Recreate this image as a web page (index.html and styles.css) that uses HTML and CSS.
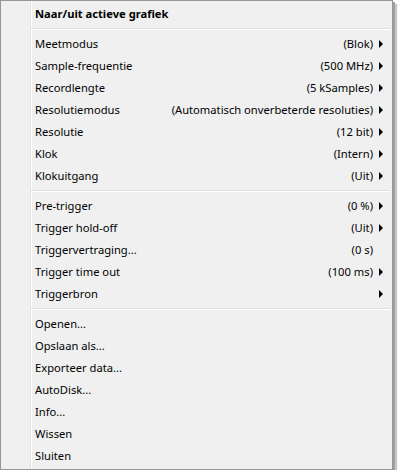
FILE: index.html
```html
<!DOCTYPE html>
<html>
<head>
<meta charset="utf-8">
<link rel="stylesheet" href="styles.css">
</head>
<body>
<div class="menu">
  <div class="row header"><span class="label">Naar/uit actieve grafiek</span></div>
  <div class="sep"></div>
  <div class="row"><span class="label">Meetmodus</span><span class="value">(Blok)</span><span class="arrow"></span></div>
  <div class="row"><span class="label">Sample-frequentie</span><span class="value">(500 MHz)</span><span class="arrow"></span></div>
  <div class="row"><span class="label">Recordlengte</span><span class="value">(5 kSamples)</span><span class="arrow"></span></div>
  <div class="row"><span class="label">Resolutiemodus</span><span class="value">(Automatisch onverbeterde resoluties)</span><span class="arrow"></span></div>
  <div class="row"><span class="label">Resolutie</span><span class="value">(12 bit)</span><span class="arrow"></span></div>
  <div class="row"><span class="label">Klok</span><span class="value">(Intern)</span><span class="arrow"></span></div>
  <div class="row"><span class="label">Klokuitgang</span><span class="value">(Uit)</span><span class="arrow"></span></div>
  <div class="sep"></div>
  <div class="row"><span class="label">Pre-trigger</span><span class="value">(0 %)</span><span class="arrow"></span></div>
  <div class="row"><span class="label">Trigger hold-off</span><span class="value">(Uit)</span><span class="arrow"></span></div>
  <div class="row"><span class="label">Triggervertraging...</span><span class="value">(0 s)</span><span class="noarrow"></span></div>
  <div class="row"><span class="label">Trigger time out</span><span class="value">(100 ms)</span><span class="arrow"></span></div>
  <div class="row"><span class="label">Triggerbron</span><span class="value"></span><span class="arrow"></span></div>
  <div class="sep"></div>
  <div class="row"><span class="label">Openen...</span></div>
  <div class="row"><span class="label">Opslaan als...</span></div>
  <div class="row"><span class="label">Exporteer data...</span></div>
  <div class="row"><span class="label">AutoDisk...</span></div>
  <div class="row"><span class="label">Info...</span></div>
  <div class="row"><span class="label">Wissen</span></div>
  <div class="row"><span class="label">Sluiten</span></div>
</div>
</body>
</html>
```
FILE: styles.css
```css
html, body {
  margin: 0;
  padding: 0;
  background: #ffffff;
}
.menu {
  box-sizing: border-box;
  width: 393px;
  border: 1px solid #979797;
  padding: 2px;
  background-color: #f0f0f0;
  background-image: linear-gradient(to right, transparent 29px, #e2e3e3 29px, #e2e3e3 30px, #ffffff 30px, #ffffff 31px, transparent 31px);
  background-origin: padding-box;
  box-shadow: 2px 2px 0 0 #a0a0a0, 4px 4px 1px 0 #c8c8c8;
  font-family: "Noto Sans", "Open Sans", sans-serif;
  font-size: 11.2px;
  color: #000;
}
.row {
  box-sizing: border-box;
  display: flex;
  align-items: center;
  height: 22px;
  padding-left: 32px;
  padding-right: 7px;
  padding-bottom: 1px;
  white-space: nowrap;
}
.label {
  flex: 1;
}
.header .label {
  font-weight: bold;
}
.value {
  text-align: right;
}
.arrow {
  width: 0;
  height: 0;
  margin-left: 6px;
  border-top: 4px solid transparent;
  border-bottom: 4px solid transparent;
  border-left: 4px solid #000;
}
.noarrow {
  width: 4px;
  margin-left: 6px;
}
.sep {
  height: 8px;
  margin-left: 28px;
  box-sizing: border-box;
  padding-top: 3px;
}
.sep::before {
  content: "";
  display: block;
  height: 1px;
  background: #e0e0e0;
  border-bottom: 1px solid #ffffff;
}
```
